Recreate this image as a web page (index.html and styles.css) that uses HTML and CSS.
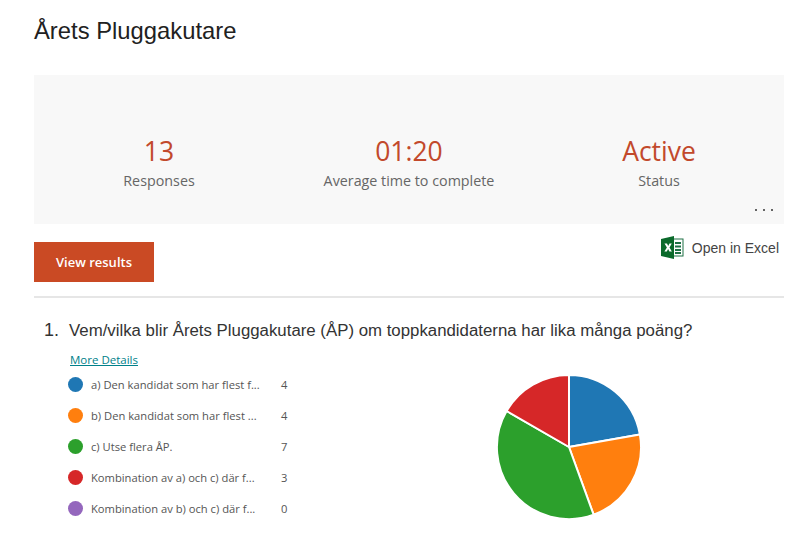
FILE: index.html
```html
<!DOCTYPE html>
<html lang="sv">
<head>
    <meta charset="UTF-8">
    <meta name="viewport" content="width=device-width, initial-scale=1.0">
    <title>Årets Pluggakutare</title>
    <link rel="stylesheet" href="styles.css">
</head>
<body>
    <h1 class="title">Årets Pluggakutare</h1>

    <div class="summary">
        <div class="stat">
            <div class="stat-value">13</div>
            <div class="stat-label">Responses</div>
        </div>
        <div class="stat">
            <div class="stat-value">01:20</div>
            <div class="stat-label">Average time to complete</div>
        </div>
        <div class="stat">
            <div class="stat-value">Active</div>
            <div class="stat-label">Status</div>
        </div>
        <div class="more">
            <span class="more-dot"></span>
            <span class="more-dot"></span>
            <span class="more-dot"></span>
        </div>
    </div>

    <div class="actions">
        <button class="btn-results">View results</button>
        <div class="excel">
            <svg class="excel-icon" width="23" height="23" viewBox="0 0 23 23">
                <rect x="9" y="3" width="13" height="17" fill="#fff" stroke="#1e7145" stroke-width="1"/>
                <path d="M14 6h6v2h-6zM14 9.500h6v2h-6zM14 13h6v2h-6zM14 16h6v2h-6z" fill="#1e7145"/>
                <path d="M0 3 L13 0 V23 L0 20 Z" fill="#0b6a2b"/>
                <path d="M3.500 7.500 H6 L7.200 10 L8.500 7.500 H10.800 L8.500 11.500 L10.900 15.500 H8.400 L7.100 12.900 L5.800 15.500 H3.400 L5.900 11.500 Z" fill="#fff"/>
            </svg>
            <span>Open in Excel</span>
        </div>
    </div>

    <hr class="rule">

    <div class="question">
        <span class="question-num">1.</span>
        <span class="question-text">Vem/vilka blir Årets Pluggakutare (ÅP) om toppkandidaterna har lika många poäng?</span>
    </div>

    <div class="answer">
        <div class="answer-left">
            <a class="details" href="#">More Details</a>
            <ul class="legend">
                <li class="legend-row"><span class="dot dot-blue"></span><span class="legend-text">a) Den kandidat som har flest f...</span><span class="legend-count">4</span></li>
                <li class="legend-row"><span class="dot dot-orange"></span><span class="legend-text">b) Den kandidat som har flest ...</span><span class="legend-count">4</span></li>
                <li class="legend-row"><span class="dot dot-green"></span><span class="legend-text">c) Utse flera ÅP.</span><span class="legend-count">7</span></li>
                <li class="legend-row"><span class="dot dot-red"></span><span class="legend-text">Kombination av a) och c) där f...</span><span class="legend-count">3</span></li>
                <li class="legend-row"><span class="dot dot-purple"></span><span class="legend-text">Kombination av b) och c) där f...</span><span class="legend-count">0</span></li>
            </ul>
        </div>
        <svg class="pie" width="150" height="150" viewBox="0 0 150 150">
            <g stroke="#fff" stroke-width="2" stroke-linejoin="round">
                <path d="M75 75 L75 3 A72 72 0 0 1 145.900 62.500 Z" fill="#1f77b4"/>
                <path d="M75 75 L145.900 62.500 A72 72 0 0 1 99.600 142.700 Z" fill="#ff7f0e"/>
                <path d="M75 75 L99.600 142.700 A72 72 0 0 1 12.600 39 Z" fill="#2ca02c"/>
                <path d="M75 75 L12.600 39 A72 72 0 0 1 75 3 Z" fill="#d62728"/>
            </g>
        </svg>
    </div>
</body>
</html>
```

FILE: styles.css
```css
html, body {
    height: 533px;
    overflow: hidden;
}
body {
    margin: 0;
    padding: 0 8px 0 34px;
    background-color: #fff;
    font-family: "Open Sans", sans-serif;
    color: #333;
}
.title {
    margin: 0;
    padding-top: 17px;
    height: 75px;
    box-sizing: border-box;
    font-family: "Liberation Sans", Arial, sans-serif;
    font-size: 23.800px;
    line-height: 28px;
    font-weight: 400;
    color: #212121;
}
.summary {
    position: relative;
    display: grid;
    grid-template-columns: repeat(3, 250px);
    height: 149px;
    padding-top: 59px;
    box-sizing: border-box;
    background-color: #f8f8f8;
}
.stat {
    text-align: center;
}
.stat-value {
    font-size: 26.500px;
    line-height: 34px;
    color: #c2492b;
}
.stat-label {
    font-size: 14.300px;
    line-height: 26px;
    color: #666;
}
.more {
    position: absolute;
    right: 11px;
    bottom: 13px;
    display: flex;
    gap: 6px;
}
.more-dot {
    width: 2px;
    height: 2px;
    border-radius: 50%;
    background-color: #333;
}
.actions {
    display: flex;
    justify-content: space-between;
    align-items: flex-start;
    padding-top: 12px;
    padding-right: 5px;
    height: 72px;
    box-sizing: border-box;
}
.btn-results {
    width: 120px;
    height: 40px;
    margin-top: 6px;
    border: none;
    background-color: #ca4a24;
    color: #fff;
    font-family: "Open Sans", sans-serif;
    font-size: 13px;
    font-weight: 600;
}
.excel {
    display: flex;
    align-items: center;
    gap: 8px;
    font-family: "Liberation Sans", Arial, sans-serif;
    font-size: 14px;
    color: #444;
}
.rule {
    margin: 0;
    border: none;
    height: 2px;
    background-color: #e6e6e6;
}
.question {
    display: flex;
    align-items: baseline;
    padding: 22px 0 0 10px;
    font-family: "Liberation Sans", Arial, sans-serif;
    color: #333;
}
.question-num {
    width: 25px;
    font-size: 18px;
}
.question-text {
    font-size: 16.820px;
    line-height: 20px;
}
.answer {
    display: flex;
    padding-left: 34px;
}
.answer-left {
    width: 426px;
}
.details {
    display: block;
    margin: 11px 0 0 2px;
    font-size: 11.500px;
    line-height: 16px;
    color: #00818a;
}
.legend {
    list-style: none;
    margin: 1px 0 0;
    padding: 0;
}
.legend-row {
    display: flex;
    align-items: center;
    height: 31px;
    font-size: 11.200px;
    color: #555;
}
.dot {
    width: 15px;
    height: 15px;
    border-radius: 50%;
    margin-right: 8px;
}
.dot-blue { background-color: #1f77b4; }
.dot-orange { background-color: #ff7f0e; }
.dot-green { background-color: #2ca02c; }
.dot-red { background-color: #d62728; }
.dot-purple { background-color: #9467bd; }
.legend-text {
    width: 190px;
    white-space: nowrap;
}
.legend-count {
    width: 20px;
}
.pie {
    margin: 31px 0 0 0;
    flex: none;
}
```
